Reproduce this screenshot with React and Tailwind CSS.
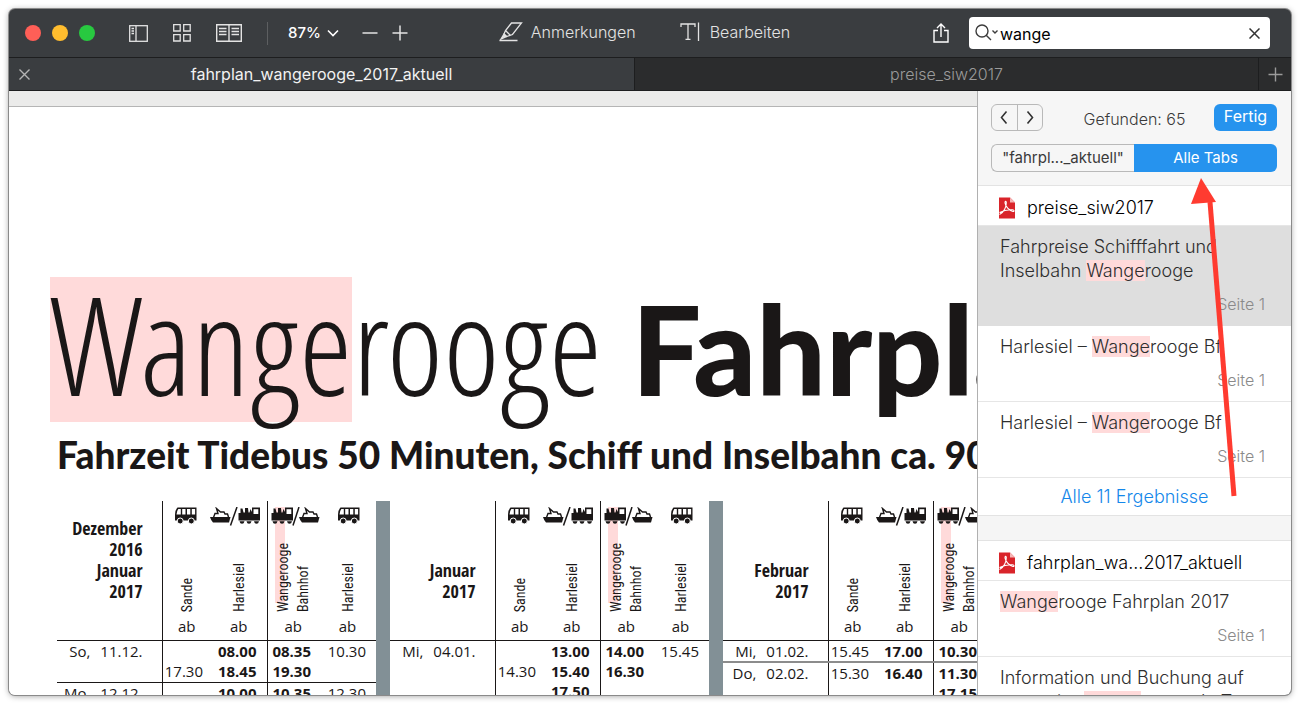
import React from "react";

const months = [
  {
    label: ["Dezember", "2016", "Januar", "2017"],
    rows: [
      { day: "So,", date: "11.12.", times: [["", "17.30"], ["08.00", "18.45"], ["08.35", "19.30"], ["10.30"]] },
      { day: "Mo,", date: "12.12.", times: [[""], ["10.00"], ["10.35"], ["12.30"]] },
    ],
  },
  {
    label: ["Januar", "2017"],
    rows: [{ day: "Mi,", date: "04.01.", times: [["", "14.30"], ["13.00", "15.40", "17.50"], ["14.00", "16.30"], ["15.45"]] }],
  },
  {
    label: ["Februar", "2017"],
    rows: [
      { day: "Mi,", date: "01.02.", times: [["15.45"], ["17.00"], ["10.30"], ["12.15"]] },
      { day: "Do,", date: "02.02.", double: true, times: [["15.30"], ["16.40"], ["11.30", "17.15"], ["13.15"]] },
    ],
  },
];

/* ---------- Timetable icons ---------- */

function BusIcon() {
  return (
    <svg width="22" height="18" viewBox="0 0 22 18" fill="#1a1717">
      <path d="M2.500 0.500H21.500V13.500H0V7.500Q0 3 2.500 0.500Z" />
      <path d="M3.300 2H5.800V7.500H1.500Q1.700 4 3.300 2ZM7.200 2h3.300v5.500H7.200ZM12 2h3.300v5.500h-3.300ZM16.800 2h3.300v5.500h-3.300Z" fill="#fff" />
      <circle cx="5.200" cy="14" r="3" stroke="#fff" strokeWidth="1" />
      <circle cx="16.300" cy="14" r="3" stroke="#fff" strokeWidth="1" />
    </svg>
  );
}

function ShipShape() {
  return (
    <g>
      <path d="M0 10H20.500L19 15.500H3Q1 13.500 0 10Z" fill="#1a1717" />
      <path d="M3.500 10.500L5 6.500H8L6.500 1.500L10.500 5H14L15 7H17.500L18.500 10" fill="none" stroke="#1a1717" strokeWidth="1.400" />
    </g>
  );
}

function TrainShape() {
  return (
    <g fill="#1a1717">
      <path d="M0.500 6H2.500V1.500H4.500L5.500 5.500H7V1H10L10.500 5.500H11.500L12.500 2L14 5V0.500H22V13.500H0.500Z" />
      <path d="M15.500 2.200H20.300V7H15.500Z" fill="#fff" />
      <path d="M1.500 14.200H6.500Q6 16.800 4 16.800Q2 16.800 1.500 14.200ZM8.500 14.200H13.500Q13 16.800 11 16.800Q9 16.800 8.500 14.200ZM16 14.200H21Q20.500 16.800 18.500 16.800Q16.500 16.800 16 14.200Z" />
    </g>
  );
}

function ShipTrainIcon({ reverse }) {
  return (
    <svg width="50" height="20" viewBox="0 0 50 20" className="shrink-0">
      <g transform={reverse ? "translate(28 0)" : undefined}>
        <ShipShape />
      </g>
      <g transform={reverse ? undefined : "translate(28 0)"}>
        <TrainShape />
      </g>
      <path d={reverse ? "M22 18.500L28 0" : "M20.500 18.500L27 0"} stroke="#1a1717" strokeWidth="1.500" />
    </svg>
  );
}

/* ---------- Document ---------- */

function ColumnHead({ children, lines, divider, hit }) {
  return (
    <th className={divider ? "relative border-l border-[#1a1717] p-0 font-normal" : "relative p-0 font-normal"}>
      {hit && <span className="absolute top-1.5 left-[7px] -z-10 h-24 w-2.5 bg-[#ffdada]" />}
      <div className="flex h-[139px] flex-col items-center pt-1.5">
        {children}
        <div className="flex min-h-0 w-full flex-1 items-end justify-center">
          <span className="rotate-180 text-left font-['Roboto_Condensed','Open_Sans_Condensed_Light','Open_Sans',sans-serif] text-sm leading-5 whitespace-nowrap [writing-mode:vertical-rl]">
            {lines.map((line) => (
              <span key={line} className="block">
                {line}
              </span>
            ))}
          </span>
        </div>
        <span className="h-7 shrink-0 pt-1 leading-5">ab</span>
      </div>
    </th>
  );
}

function Timetable({ label, rows }) {
  return (
    <>
      <table className="relative z-0 w-[319px] shrink-0 table-fixed border-collapse text-[15px] leading-5">
        <colgroup>
          <col className="w-[105px]" />
          <col className="w-[49px]" />
          <col className="w-14" />
          <col className="w-[52px]" />
          <col className="w-[57px]" />
        </colgroup>
        <thead>
          <tr>
            <th className="p-0 pr-[19px] pb-[38px] text-right align-bottom font-['Open_Sans_Condensed','Open_Sans',sans-serif] text-lg leading-[21px] font-bold">
              {label.map((line) => (
                <div key={line}>{line}</div>
              ))}
            </th>
            <ColumnHead divider lines={["Sande"]}>
              <div className="flex h-5 justify-center pr-0.5">
                <BusIcon />
              </div>
            </ColumnHead>
            <ColumnHead lines={["Harlesiel"]}>
              <div className="flex h-5 justify-center pr-2">
                <ShipTrainIcon />
              </div>
            </ColumnHead>
            <ColumnHead divider hit lines={["Wangerooge", "Bahnhof"]}>
              <div className="flex h-5 justify-center pl-1.5">
                <ShipTrainIcon reverse />
              </div>
            </ColumnHead>
            <ColumnHead lines={["Harlesiel"]}>
              <div className="flex h-5 justify-center pl-0.5">
                <BusIcon />
              </div>
            </ColumnHead>
          </tr>
        </thead>
        <tbody>
          {rows.map((row) => (
            <tr key={row.date} className={row.double ? "border-t-2 border-[#8c8c8c] align-top" : "border-t border-[#1a1717] align-top"}>
              <td className="p-0 pr-[19px]">
                <div className="flex justify-end gap-2.5">
                  <span>{row.day}</span>
                  <span>{row.date}</span>
                </div>
              </td>
              {row.times.map((list, i) => (
                <td
                  key={i}
                  className={
                    i === 0
                      ? "border-l border-l-[#1a1717] p-0 pr-2 text-right"
                      : i === 1
                        ? "p-0 pr-2.5 text-right font-bold"
                        : i === 2
                          ? "border-l border-l-[#1a1717] p-0 pr-2 text-right font-bold"
                          : "p-0 pr-2.5 text-right"
                  }
                >
                  {list.map((time, n) => (
                    <div key={n} className="h-5">
                      {time}
                    </div>
                  ))}
                </td>
              ))}
            </tr>
          ))}
          {/* carries the column rules down to the page edge */}
          <tr className="h-40">
            <td />
            <td className="border-l border-[#1a1717]" />
            <td />
            <td className="border-l border-[#1a1717]" />
            <td />
          </tr>
        </tbody>
      </table>
      <div className="w-3.5 shrink-0 bg-[#829096]" />
    </>
  );
}

function Document() {
  return (
    <main className="min-w-0 flex-1 overflow-hidden bg-[#ebebea] pt-[15px]">
      <article className="h-full border-t border-[#b5b5b5] bg-white pt-[170px] pl-[41px] font-['Open_Sans',sans-serif] text-[#1a1717]">
        <h1 className="h-[145px] font-['Open_Sans_Condensed_Light','Open_Sans',sans-serif] text-[136px] leading-[133px] font-light whitespace-nowrap">
          <mark className="inline-block bg-[#ffdada] pb-3 text-inherit">Wange</mark>rooge{" "}
          <strong className="pl-1 font-['Lato',sans-serif] text-[123px] font-black">Fahrplan</strong>
        </h1>
        <h2 className="mt-2 mb-[21px] pl-[7px] font-['Lato',sans-serif] text-[37px] leading-[50px] font-black whitespace-nowrap">
          Fahrzeit Tidebus 50 Minuten, Schiff und Inselbahn ca. 90 Minuten
        </h2>
        <div className="flex pl-[7px]">
          {months.map((month) => (
            <Timetable key={month.label.join()} {...month} />
          ))}
        </div>
      </article>
    </main>
  );
}

/* ---------- Toolbar ---------- */

function Toolbar() {
  return (
    <header className="flex h-12 shrink-0 items-center pr-[21px] pl-4 text-base text-[#e3e3e3]">
      <div className="flex gap-[11px]">
        <button aria-label="Schließen" className="size-4 rounded-full bg-[#ff5f57]" />
        <button aria-label="Minimieren" className="size-4 rounded-full bg-[#ffbd2e]" />
        <button aria-label="Zoomen" className="size-4 rounded-full bg-[#28c940]" />
      </div>
      <button aria-label="Seitenleiste" className="ml-[34px]">
        <svg width="19" height="17" viewBox="0 0 19 17" fill="none" stroke="currentColor" strokeWidth="1.300">
          <rect x="0.700" y="0.700" width="17.600" height="15.600" />
          <path d="M7 1V16M2.500 3.500H5M2.500 6H5M2.500 8.500H5" />
        </svg>
      </button>
      <button aria-label="Miniaturen" className="ml-[25px]">
        <svg width="18" height="18" viewBox="0 0 18 18" fill="none" stroke="currentColor" strokeWidth="1.300">
          <path d="M0.700 0.700H7.200V7H0.700ZM10.700 0.700H17.200V7H10.700ZM0.700 10.700H7.200V17H0.700ZM10.700 10.700H17.200V17H10.700Z" />
        </svg>
      </button>
      <button aria-label="Doppelseite" className="ml-[25px]">
        <svg width="26" height="18" viewBox="0 0 26 18" fill="none" stroke="currentColor" strokeWidth="1.400">
          <path d="M0.700 0.700H25.300V17.300H0.700ZM13 1V17M3 4.500H10.500M3 7.500H10.500M3 10.500H10.500M15.500 4.500H23M15.500 7.500H23M15.500 10.500H23" />
        </svg>
      </button>
      <span className="ml-[25px] h-[23px] w-px bg-[#5d5f61]" />
      <button className="ml-5 flex items-center gap-1.5 text-[15px] font-medium text-white">
        87%
        <svg width="12" height="8" viewBox="0 0 12 8" fill="none" stroke="currentColor" strokeWidth="1.600">
          <path d="M1 1.500L6 6.500L11 1.500" />
        </svg>
      </button>
      <button aria-label="Verkleinern" className="ml-[23px]">
        <svg width="16" height="16" viewBox="0 0 16 16" stroke="currentColor" strokeWidth="1.500">
          <path d="M0.500 8H15.500" />
        </svg>
      </button>
      <button aria-label="Vergrößern" className="ml-3.5">
        <svg width="16" height="16" viewBox="0 0 16 16" stroke="currentColor" strokeWidth="1.500">
          <path d="M0.500 8H15.500M8 0.500V15.500" />
        </svg>
      </button>
      <div className="flex flex-1 items-center justify-center gap-11 pr-[52px] pb-0.5">
        <button className="flex items-center gap-2 font-light">
          <svg width="24" height="20" viewBox="0 0 24 20" fill="none" stroke="currentColor" strokeWidth="1.300">
            <path d="M12.500 1H22.500L13.500 12.500L7.500 14.500L5 12L6.500 8.500ZM6.500 8.500L11 13" />
            <path d="M5 12L7.500 14.500L2 17Z" fill="currentColor" />
            <path d="M0.500 18.500H18.500" />
          </svg>
          Anmerkungen
        </button>
        <button className="flex items-center gap-2.5 font-light">
          <svg width="20" height="20" viewBox="0 0 20 20" fill="none" stroke="currentColor" strokeWidth="1.300">
            <path d="M1 5V2H15V5M8 2V17M5.500 17.300H10.500M18.500 0.500V19" />
          </svg>
          Bearbeiten
        </button>
      </div>
      <button aria-label="Teilen" className="mr-5 text-white">
        <svg width="16" height="20" viewBox="0 0 16 20" fill="none" stroke="currentColor" strokeWidth="1.400">
          <path d="M5 7.500H1V19H15V7.500H11M8 14V1M4 5L8 1L12 5" />
        </svg>
      </button>
      <label className="flex h-8 w-[301px] shrink-0 items-center rounded bg-white pr-2.5 pl-1.5 text-black">
        <svg width="24" height="18" viewBox="0 0 24 18" fill="none" stroke="#3d3d3d" strokeWidth="1.400" aria-hidden="true">
          <circle cx="7" cy="7" r="6" />
          <path d="M11.200 11.200L16 16M17.500 6.500L20 9L22.500 6.500" />
        </svg>
        <input aria-label="Suchen" defaultValue="wange" className="ml-px w-0 flex-1 pt-0.5 outline-none" />
        <svg width="11" height="11" viewBox="0 0 11 11" stroke="#333" strokeWidth="1.500" aria-hidden="true">
          <path d="M0.500 0.500L10.500 10.500M10.500 0.500L0.500 10.500" />
        </svg>
      </label>
    </header>
  );
}

function TabBar() {
  return (
    <nav className="grid h-[34px] shrink-0 grid-cols-[1fr_1fr_32px] border-y border-[#1d1e1f] bg-[#2b2c2d] text-base text-[#9b9b9b]">
      <div className="flex items-center bg-[#3a3d40] pl-2.5">
        <button aria-label="Tab schließen">
          <svg width="11" height="11" viewBox="0 0 11 11" stroke="#b4b4b4" strokeWidth="1.400">
            <path d="M0.500 0.500L10.500 10.500M10.500 0.500L0.500 10.500" />
          </svg>
        </button>
        <button className="flex-1 pr-[21px] text-[#f2f2f2]">fahrplan_wangerooge_2017_aktuell</button>
      </div>
      <button className="border-x border-[#1d1e1f] font-light">preise_siw2017</button>
      <button aria-label="Neuer Tab" className="flex items-center justify-center">
        <svg width="15" height="15" viewBox="0 0 15 15" stroke="currentColor" strokeWidth="1.400">
          <path d="M0.500 7.500H14.500M7.500 0.500V14.500" />
        </svg>
      </button>
    </nav>
  );
}

/* ---------- Search results ---------- */

function Hit({ children }) {
  return <mark className="bg-[#ffdada] text-inherit">{children}</mark>;
}

function FileRow({ name }) {
  return (
    <h3 className="flex h-10 items-center gap-3 border-b border-[#e6e6e6] pt-1 pl-5 text-lg font-light text-black">
      <svg width="17" height="22" viewBox="0 0 17 22" aria-hidden="true">
        <path d="M1 0.500H12L17 5.500V21.500H1Z" fill="#d9242a" />
        <path d="M12 0.500V5.500H17Z" fill="#f7b5b5" />
        <path
          d="M1.500 17.500C6 15.500 8.500 9.500 8.300 5.500C8.200 3.800 6.800 4 7 6C7.500 9.500 11 13.500 15 14.500C16.500 14.800 16.500 13 14.500 12.800C11 12.500 5.500 13.500 1.500 15.500"
          fill="none"
          stroke="#fff"
          strokeWidth="1.100"
        />
      </svg>
      {name}
    </h3>
  );
}

function Result({ children, active }) {
  return (
    <li className={active ? "border-b border-[#dedede] bg-[#dedede] px-[22px] py-[9px]" : "border-b border-[#e6e6e6] px-[22px] py-[9px]"}>
      <p className="text-lg leading-6 font-light text-[#2e2e2e]">{children}</p>
      <p className="mt-[9px] pr-1 text-right text-base leading-6 font-light text-[#8a8a8a]">Seite 1</p>
    </li>
  );
}

function Sidebar() {
  return (
    <aside className="w-[314px] shrink-0 overflow-hidden border-l border-[#b0b0b0] bg-white">
      <div className="flex flex-col gap-[13px] border-b border-[#e3e3e3] bg-[#f6f6f6] py-[13px] pr-3.5 pl-[13px] text-[#3a3a3a]">
        <div className="flex items-center justify-between">
          <div className="flex h-[27px] w-[52px] rounded-md border border-[#b9b9b9]">
            <button aria-label="Zurück" className="flex flex-1 items-center justify-center border-r border-[#b9b9b9]">
              <svg width="8" height="13" viewBox="0 0 8 13" fill="none" stroke="#333" strokeWidth="1.600">
                <path d="M6.500 0.500L1.500 6.500L6.500 12.500" />
              </svg>
            </button>
            <button aria-label="Weiter" className="flex flex-1 items-center justify-center">
              <svg width="8" height="13" viewBox="0 0 8 13" fill="none" stroke="#333" strokeWidth="1.600">
                <path d="M1.500 0.500L6.500 6.500L1.500 12.500" />
              </svg>
            </button>
          </div>
          <span className="pt-0.5 pl-3 font-light">Gefunden: 65</span>
          <button className="h-[27px] w-[63px] rounded-md bg-[#2693ee] pb-1 text-white">Fertig</button>
        </div>
        <div className="grid h-7 grid-cols-2 text-[15px]">
          <button className="rounded-l-md border border-r-0 border-[#b9b9b9]">"fahrpl..._aktuell"</button>
          <button className="rounded-r-md bg-[#2693ee] text-white">Alle Tabs</button>
        </div>
      </div>
      <FileRow name="preise_siw2017" />
      <ul>
        <Result active>
          Fahrpreise Schifffahrt und
          <br />
          Inselbahn <Hit>Wange</Hit>rooge
        </Result>
        <Result>
          Harlesiel – <Hit>Wange</Hit>rooge Bf
        </Result>
        <Result>
          Harlesiel – <Hit>Wange</Hit>rooge Bf
        </Result>
      </ul>
      <a href="#ergebnisse" className="block h-[37px] text-center text-lg leading-[37px] font-light text-[#1487ea]">
        Alle 11 Ergebnisse
      </a>
      <div className="h-[26px] border-y border-[#e3e3e3] bg-[#f5f5f5]" />
      <FileRow name="fahrplan_wa...2017_aktuell" />
      <ul>
        <Result>
          <Hit>Wange</Hit>rooge Fahrplan 2017
        </Result>
        <Result>
          Information und Buchung auf
          <br />
          www.siw-<Hit>wange</Hit>rooge.de T
        </Result>
      </ul>
    </aside>
  );
}

function App() {
  return (
    <div className="relative h-screen overflow-hidden bg-white p-[9px] font-['Inter',sans-serif]">
      <div className="flex h-full flex-col overflow-hidden rounded-md bg-[#3a3d40] shadow-[0_0_0_1px_#8a8a8a,0_1px_6px_#00000066]">
        <Toolbar />
        <TabBar />
        <div className="flex min-h-0 flex-1">
          <Document />
          <Sidebar />
        </div>
      </div>
      {/* callout arrow over the results */}
      <svg className="pointer-events-none absolute top-44 right-[60px]" width="52" height="324" viewBox="0 0 52 324">
        <path d="M22 26L46 320" stroke="#ff3b30" strokeWidth="5" />
        <path d="M13 2L28 26L3 28Z" fill="#ff3b30" />
      </svg>
    </div>
  );
}

export default App;
